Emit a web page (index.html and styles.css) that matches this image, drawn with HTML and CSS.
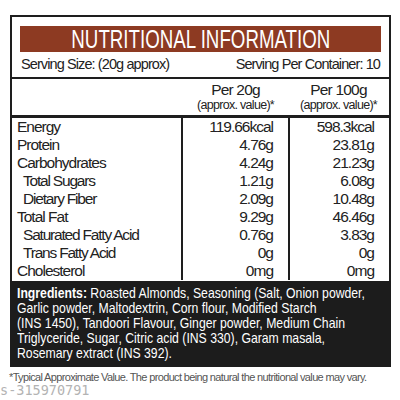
FILE: index.html
```html
<!DOCTYPE html>
<html lang="en">

<head>
    <meta charset="UTF-8">
    <meta name="viewport" content="width=device-width, initial-scale=1.0">
    <title>Nutritional Information</title>
    <link rel="stylesheet" href="styles.css">
</head>

<body>
    <div id="label">
        <div class="top">
            <p class="mainHeading"><span>NUTRITIONAL INFORMATION</span></p>
            <div class="serving">
                <span>Serving Size: (20g approx)</span>
                <span>Serving Per Container: 10</span>
            </div>
        </div>
        <div class="colHead">
            <span></span>
            <span class="per">Per 20g<small>(approx. value)*</small></span>
            <span class="per">Per 100g<small>(approx. value)*</small></span>
        </div>
        <div class="facts">
            <div class="names">
                <span>Energy</span>
                <span>Protein</span>
                <span>Carbohydrates</span>
                <span class="sub">Total Sugars</span>
                <span class="sub">Dietary Fiber</span>
                <span>Total Fat</span>
                <span class="sub">Saturated Fatty Acid</span>
                <span class="sub">Trans Fatty Acid</span>
                <span>Cholesterol</span>
            </div>
            <div class="values">
                <span>119.66kcal</span>
                <span>4.76g</span>
                <span>4.24g</span>
                <span>1.21g</span>
                <span>2.09g</span>
                <span>9.29g</span>
                <span>0.76g</span>
                <span>0g</span>
                <span>0mg</span>
            </div>
            <div class="values">
                <span>598.3kcal</span>
                <span>23.81g</span>
                <span>21.23g</span>
                <span>6.08g</span>
                <span>10.48g</span>
                <span>46.46g</span>
                <span>3.83g</span>
                <span>0g</span>
                <span>0mg</span>
            </div>
        </div>
        <div class="ingredients">
            <p><b>Ingredients:</b> Roasted Almonds, Seasoning (Salt, Onion powder,<br>Garlic powder, Maltodextrin, Corn flour, Modified Starch<br>(INS 1450), Tandoori Flavour, Ginger powder, Medium Chain<br>Triglyceride, Sugar, Citric acid (INS 330), Garam masala,<br>Rosemary extract (INS 392).</p>
        </div>
    </div>
    <p class="note">*Typical Approximate Value. The product being natural the nutritional value may vary.</p>
    <p class="code">s-315970791</p>
</body>

</html>
```

FILE: styles.css
```css
body {
    margin: 0;
    background: #fff;
    color: #222;
    font-family: "Liberation Sans", Arial, sans-serif;
}

#label {
    width: 377px;
    margin: 15px 0 0 10px;
    border: 2px solid #1e1e1e;
    border-bottom: none;
}

.top {
    padding: 9px 8px 0 8px;
    border-bottom: 2px solid #1e1e1e;
}

.mainHeading {
    margin: 0;
    height: 26px;
    background: #8d3a22;
    color: #fff;
    font-size: 26px;
    line-height: 27px;
    text-align: center;
}

.mainHeading span {
    display: inline-block;
    transform: scaleX(0.72);
    white-space: nowrap;
}

.serving {
    display: flex;
    justify-content: space-between;
    font-size: 14.5px;
    letter-spacing: -0.9px;
    line-height: 24px;
    padding: 0 1px 1px 1px;
}

.colHead {
    display: grid;
    grid-template-columns: 171px 105px 1fr;
    height: 36px;
    border-bottom: 3px solid #1e1e1e;
}

.per {
    display: flex;
    flex-direction: column;
    align-items: center;
    padding-top: 2px;
    font-size: 15.5px;
    letter-spacing: -0.8px;
    line-height: 17px;
}

.per small {
    font-size: 12.5px;
    letter-spacing: -0.7px;
    line-height: 14px;
}

.facts {
    display: grid;
    grid-template-columns: 171px 105px 1fr;
    padding-bottom: 1px;
}

.facts span {
    display: block;
    height: 18px;
    line-height: 18px;
    font-size: 15.5px;
    letter-spacing: -1px;
}

.names {
    padding-left: 5px;
    border-right: 2px solid #1e1e1e;
}

.names .sub {
    padding-left: 6px;
    letter-spacing: -1.2px;
}

.values {
    text-align: right;
    padding-right: 15px;
}

.values + .values {
    border-left: 2px solid #1e1e1e;
    padding-right: 15px;
}

.ingredients {
    margin: 0 -2px;
    height: 86px;
    padding: 4px 0 0 7px;
    box-sizing: border-box;
    background: #1c1c1c;
    color: #fff;
    overflow: hidden;
}

.ingredients p {
    display: inline-block;
    margin: 0;
    font-size: 15px;
    line-height: 15px;
    white-space: nowrap;
    transform: scaleX(0.815);
    transform-origin: 0 0;
}

.note {
    margin: 4px 0 0 9px;
    font-size: 11px;
    letter-spacing: -0.65px;
    color: #555;
    white-space: nowrap;
}

.code {
    margin: 0;
    font-family: "DejaVu Sans Mono", monospace;
    font-size: 13.5px;
    line-height: 14px;
    color: #b3b3b3;
}
```
